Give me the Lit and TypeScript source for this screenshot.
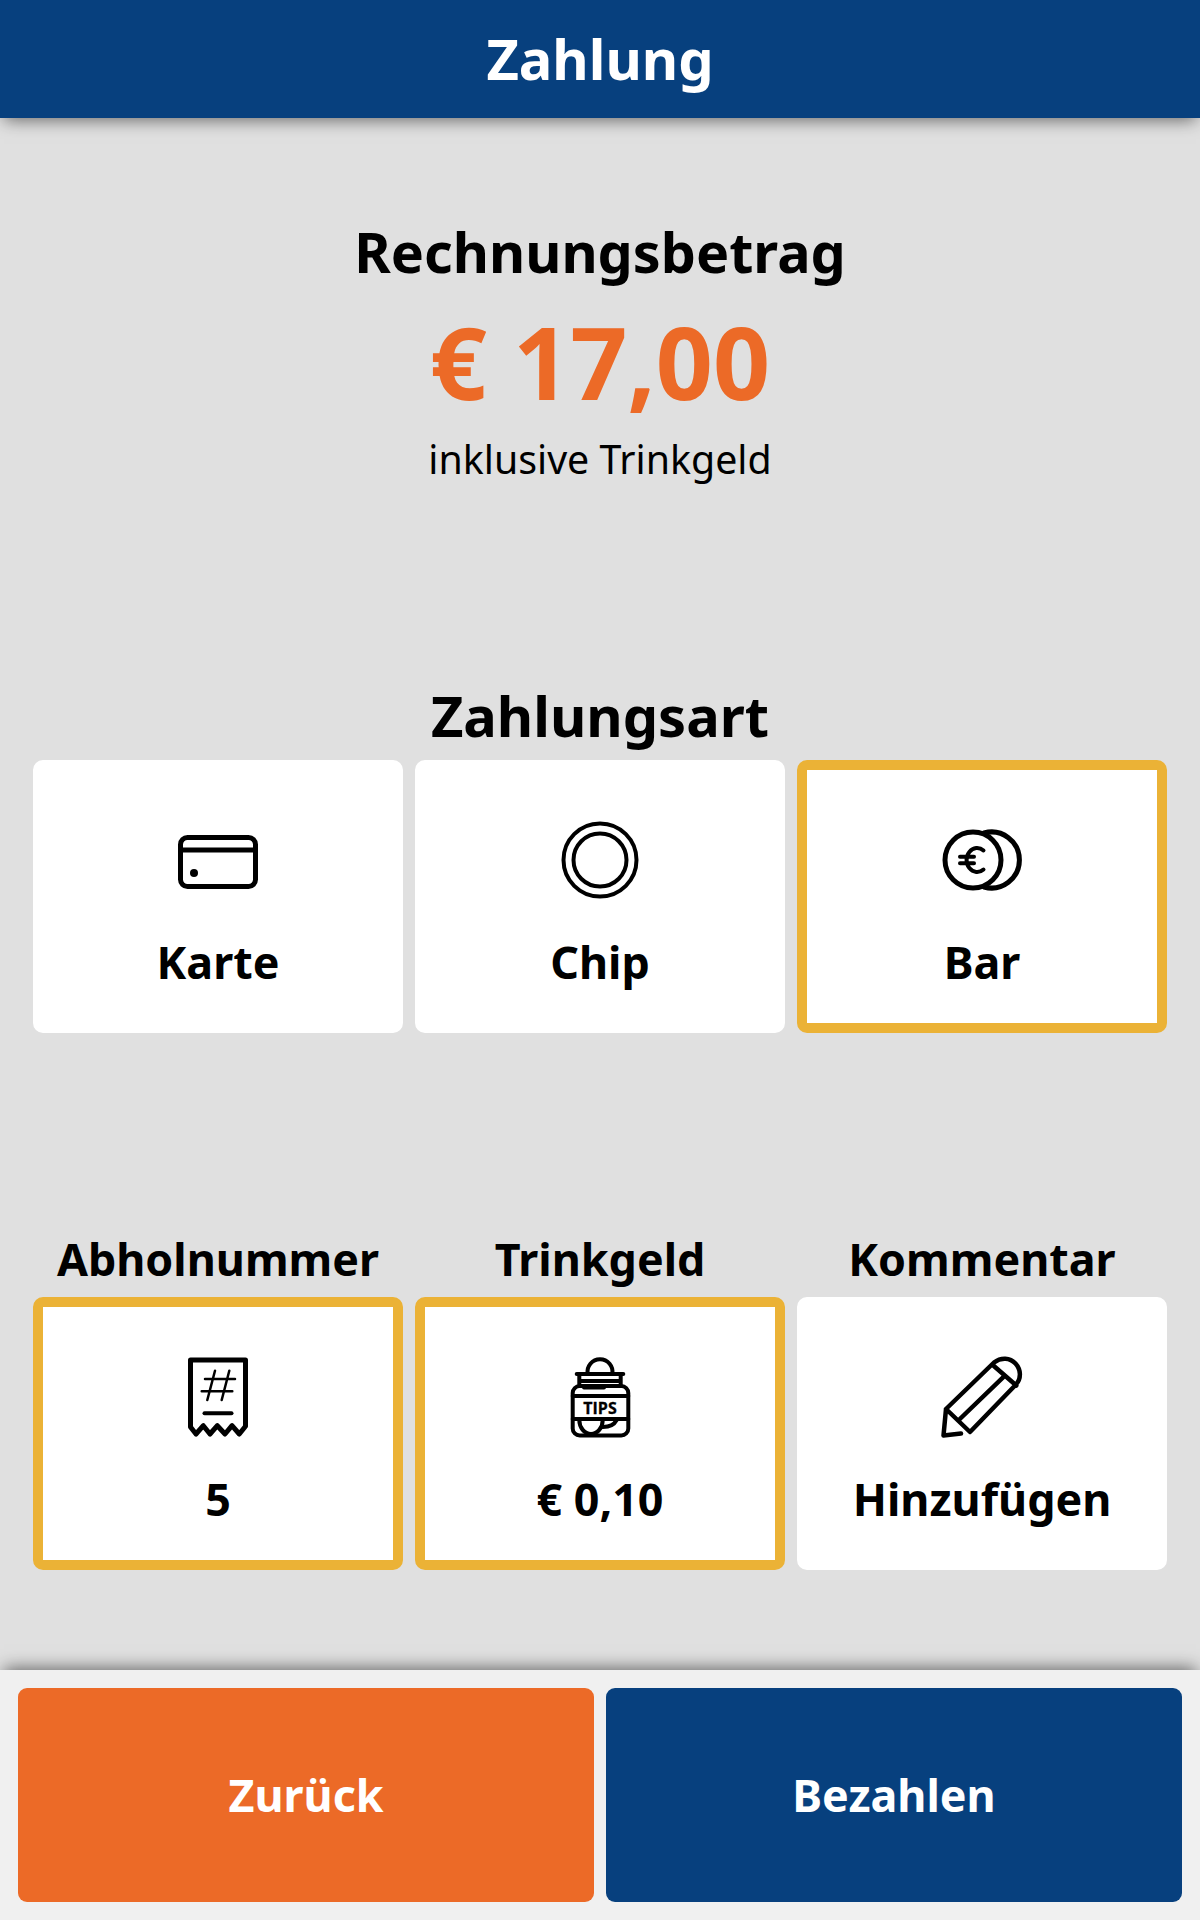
import { LitElement, html, css, svg } from 'lit';
import { customElement } from 'lit/decorators.js';
import { classMap } from 'lit/directives/class-map.js';

const icons = {
  card: svg`<rect x="2.5" y="17.5" width="75" height="49" rx="7"/><path d="M2.5 30h75"/><circle class="fill" cx="16" cy="53" r="4"/>`,
  chip: svg`<circle cx="40" cy="40" r="36.5" stroke-width="4"/><circle cx="40" cy="40" r="26.5" stroke-width="4"/>`,
  cash: svg`<circle cx="31" cy="40" r="28"/><path d="M42 13A28 28 0 1 1 42 67"/>
    <path d="M41.500 30.500A10.500 12 0 1 0 41.500 49.500M18 36.700h14M18 43.300h14" stroke-width="4"/>`,
  receipt: svg`<path d="M12.500 3h55v66.300L61.300 77 54 68.700 47 77l-7.700-8.300L32 77l-6.700-8.300L18 77l-5.500-7z" stroke-linejoin="round"/>
    <path d="M27 22h30M23.700 34.300h30.600M37 13.700 29.300 43M51.300 13.700 43.700 43" stroke-width="2.500"/>
    <path d="M26.500 56.300h27" stroke-width="4"/>`,
  tips: svg`<g stroke-width="4">
      <path d="M27.700 17A12.500 12.500 0 1 1 52.300 17M16.700 17h46.600M19.300 17v12M60.700 17v12M20 24h40"/>
      <rect x="12.700" y="29" width="55.600" height="49.500" rx="7"/>
      <path d="M12.700 39h55.600M12.700 62h55.600M24 30.500h20M19.300 63a11.700 14 0 0 0 23.400 0M43 70c6 0 11-2 13.700-7"/>
    </g>
    <text class="jar-text" x="40" y="56.500" text-anchor="middle">TIPS</text>`,
  pencil: svg`<path d="M19 76.500 1.500 78.500 4 52 52 5.500c7-5.500 16-5 21.500 1s6 15 .5 21L28 75 4 52M51.300 8.500l23 20M61.300 20.200 16.300 63.500" stroke-width="4.500" stroke-linejoin="round"/>`,
};

@customElement('pay-tile')
class PayTile extends LitElement {
  static properties = {
    icon: { type: String },
    label: { type: String },
    active: { type: Boolean },
  };

  icon = 'card';
  label = '';
  active = false;

  static styles = css`
    :host {
      display: block;
    }
    .tile {
      box-sizing: border-box;
      height: 273px;
      padding-top: 50px;
      background: #fff;
      border: 10px solid #fff;
      border-radius: 10px;
      text-align: center;
    }
    .tile.active {
      border-color: #ebb236;
    }
    svg {
      display: block;
      margin: 0 auto;
      width: 80px;
      height: 80px;
      overflow: visible;
      fill: none;
      stroke: #000;
      stroke-width: 5;
      stroke-linecap: round;
    }
    .fill {
      fill: #000;
      stroke: none;
    }
    .jar-text {
      font: 700 16px 'Open Sans', sans-serif;
      fill: #000;
      stroke: #000;
      stroke-width: 0.3;
    }
    .label {
      margin-top: 32px;
      font-size: 44.8px;
      line-height: 60px;
      font-weight: 700;
      color: #000;
    }
  `;

  render() {
    return html`
      <div class=${classMap({ tile: true, active: this.active })}>
        <svg viewBox="0 0 80 80">${icons[this.icon as keyof typeof icons]}</svg>
        <div class="label">${this.label}</div>
      </div>
    `;
  }
}

@customElement('app-root')
class AppRoot extends LitElement {
  static styles = css`
    :host {
      display: flex;
      flex-direction: column;
      height: 1920px;
      background: #e0e0e0;
      font-family: 'Noto Sans', sans-serif;
      color: #000;
    }
    .header {
      position: relative;
      flex: none;
      height: 118px;
      background: #07407e;
      color: #fff;
      font-size: 56px;
      font-weight: 700;
      line-height: 116px;
      text-align: center;
      box-shadow: 0 6px 16px -4px rgba(0, 0, 0, 0.55);
    }
    .main {
      flex: 1;
      display: flex;
      flex-direction: column;
      padding: 0 33px;
    }
    .summary {
      margin-top: 98px;
      text-align: center;
    }
    .heading {
      font-size: 55.7px;
      line-height: 70px;
      font-weight: 700;
      text-align: center;
    }
    .amount {
      margin-top: 19px;
      font-size: 100px;
      line-height: 112px;
      font-weight: 700;
      color: #ec6a27;
    }
    .note {
      margin-top: 15px;
      font-size: 39.3px;
      line-height: 54px;
    }
    .methods {
      margin-top: 194px;
    }
    .methods .heading {
      margin-bottom: 10px;
      font-size: 56px;
    }
    .row {
      display: grid;
      grid-template-columns: repeat(3, 1fr);
      gap: 12px;
    }
    .options {
      margin-top: 196px;
    }
    .caption {
      font-size: 44.8px;
      line-height: 60px;
      font-weight: 700;
      text-align: center;
      margin-bottom: 8px;
    }
    .footer {
      position: relative;
      flex: none;
      box-sizing: border-box;
      height: 250px;
      padding: 18px;
      background: #f0f0f0;
      display: grid;
      grid-template-columns: 1fr 1fr;
      gap: 12px;
      box-shadow: 0 -6px 16px -4px rgba(0, 0, 0, 0.55);
    }
    .btn {
      box-sizing: border-box;
      height: 214px;
      padding-bottom: 2px;
      border-radius: 9px;
      display: flex;
      align-items: center;
      justify-content: center;
      color: #fff;
      font-size: 44.8px;
      font-weight: 700;
    }
    .back {
      background: #ec6a27;
    }
    .pay {
      background: #07407e;
    }
  `;

  render() {
    return html`
      <div class="header">Zahlung</div>
      <div class="main">
        <div class="summary">
          <div class="heading">Rechnungsbetrag</div>
          <div class="amount">€ 17,00</div>
          <div class="note">inklusive Trinkgeld</div>
        </div>
        <div class="methods">
          <div class="heading">Zahlungsart</div>
          <div class="row">
            <pay-tile icon="card" label="Karte"></pay-tile>
            <pay-tile icon="chip" label="Chip"></pay-tile>
            <pay-tile icon="cash" label="Bar" active></pay-tile>
          </div>
        </div>
        <div class="options row">
          <div>
            <div class="caption">Abholnummer</div>
            <pay-tile icon="receipt" label="5" active></pay-tile>
          </div>
          <div>
            <div class="caption">Trinkgeld</div>
            <pay-tile icon="tips" label="€ 0,10" active></pay-tile>
          </div>
          <div>
            <div class="caption">Kommentar</div>
            <pay-tile icon="pencil" label="Hinzufügen"></pay-tile>
          </div>
        </div>
      </div>
      <div class="footer">
        <div class="btn back">Zurück</div>
        <div class="btn pay">Bezahlen</div>
      </div>
    `;
  }
}
